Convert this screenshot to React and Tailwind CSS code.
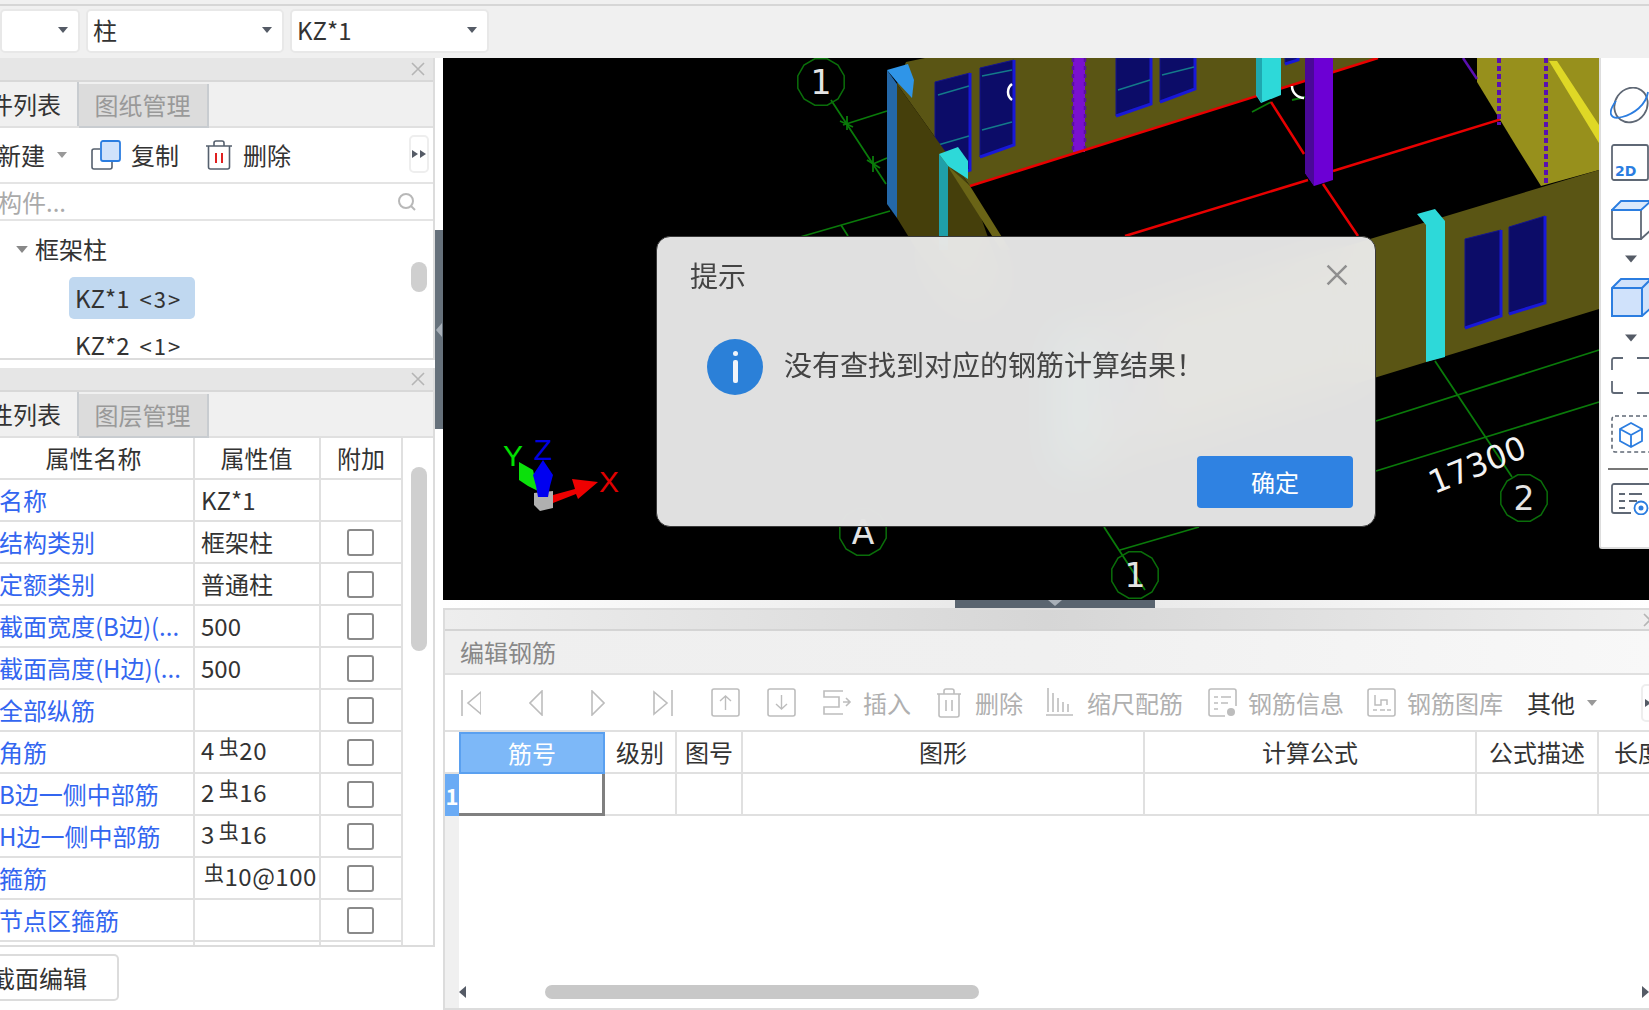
import React from 'react';

const PROPS = [
  { name: '名称', value: 'KZ*1', check: false },
  { name: '结构类别', value: '框架柱', check: true },
  { name: '定额类别', value: '普通柱', check: true },
  { name: '截面宽度(B边)(...', value: '500', check: true },
  { name: '截面高度(H边)(...', value: '500', check: true },
  { name: '全部纵筋', value: '', check: true },
  { name: '角筋', rebar: ['4', '20'], check: true },
  { name: 'B边一侧中部筋', rebar: ['2', '16'], check: true },
  { name: 'H边一侧中部筋', rebar: ['3', '16'], check: true },
  { name: '箍筋', rebar: ['', '10@100'], check: true },
  { name: '节点区箍筋', value: '', check: true },
  { name: '', value: '', check: false },
];

const Caret = ({ className = '' }) => (
  <svg width="10" height="6" viewBox="0 0 10 6" className={className}>
    <path d="M0 0H10L5 6Z" fill="currentColor" />
  </svg>
);

const CloseX = ({ size = 14, color = '#b5b5b5' }) => (
  <svg width={size} height={size} viewBox="0 0 14 14">
    <path d="M1 1L13 13M13 1L1 13" stroke={color} strokeWidth="1.6" fill="none" />
  </svg>
);

const Dropdown = ({ width, text }) => (
  <div className={`${width} h-[44px] shrink-0 bg-white rounded-[5px] border-2 border-[#e8e8e8] flex items-center pl-[5px] pr-[10px] pb-[2px] text-[24px] text-[#333]`}>
    <span className="flex-1">{text}</span>
    <Caret className="text-[#555b66]" />
  </div>
);

const Tabs = ({ first, second }) => (
  <div className="h-[46px] bg-[#f0f0f0] border-b-2 border-[#e0e0e0] flex shrink-0">
    <div className="w-[79px] overflow-hidden flex items-center justify-end pr-[16px] border-r-2 border-[#c8ccd0] text-[24px] text-[#333] whitespace-nowrap">{first}</div>
    <div className="w-[130px] bg-[#dcdcdc] border-r-2 border-b-2 border-[#c8ccd0] mt-[2px] -mb-[2px] flex items-center justify-center pr-[1px] text-[24px] text-[#999]">{second}</div>
  </div>
);

const PanelHeader = ({ height }) => (
  <div className={`${height} bg-[#e6e6e6] border-b-2 border-[#d8d8d8] flex items-center justify-end pr-[8px] shrink-0`}>
    <CloseX />
  </div>
);

const PropValue = ({ row }) => {
  if (row.rebar) {
    return (
      <span className="flex items-center whitespace-nowrap -translate-y-[2px] tracking-[0.5px]">
        {row.rebar[0] ? <span className="mr-[4px]">{row.rebar[0]}</span> : <span className="w-[3px]" />}
        <span className="text-[20px] -translate-y-[3px]">虫</span>
        <span>{row.rebar[1]}</span>
      </span>
    );
  }
  return row.value;
};

function LeftColumn() {
  return (
    <div className="w-[435px] shrink-0 flex flex-col bg-white">
      {/* component list */}
      <div className="h-[302px] flex flex-col border-r-2 border-b-2 border-[#dcdcdc] overflow-hidden">
        <PanelHeader height="h-[24px]" />
        <Tabs first="构件列表" second="图纸管理" />
        <div className="h-[56px] shrink-0 border-b-2 border-[#e4e4e4] flex items-center text-[24px] text-[#333]">
          <span className="-ml-[3px] w-[48px] shrink-0">新建</span>
          <Caret className="ml-[12px] text-[#999]" />
          <svg width="30" height="30" viewBox="0 0 30 30" className="ml-[24px]">
            <path d="M9 9H3a2 2 0 0 0-2 2v16a2 2 0 0 0 2 2h16a2 2 0 0 0 2-2v-6" fill="none" stroke="#55606e" strokeWidth="1.6" />
            <rect x="10" y="1" width="19" height="20" rx="2" fill="#d0e2fb" stroke="#2b7de0" strokeWidth="1.8" />
          </svg>
          <span className="ml-[10px]">复制</span>
          <svg width="28" height="30" viewBox="0 0 28 30" className="ml-[26px]">
            <path d="M1 6H27M9 6V3a2 2 0 0 1 2-2h6a2 2 0 0 1 2 2v3M3.5 6V27a2 2 0 0 0 2 2h17a2 2 0 0 0 2-2V6" fill="none" stroke="#55606e" strokeWidth="1.6" />
            <path d="M11 13V23M17 13V23" stroke="#e02020" strokeWidth="2" />
          </svg>
          <span className="ml-[10px]">删除</span>
          <div className="ml-auto mr-[4px] w-[20px] h-[38px] border-2 border-[#eeeeee] rounded-[5px] flex items-center justify-center -mt-[2px]">
            <svg width="14" height="10" viewBox="0 0 14 10"><path d="M0 1L6 5L0 9ZM8 1L14 5L8 9Z" fill="#555b66" /></svg>
          </div>
        </div>
        <div className="h-[37px] shrink-0 border-b-2 border-[#e4e4e4] flex items-center justify-between pr-[16px] text-[24px] text-[#aaa]">
          <span className="-ml-[2px]">构件...</span>
          <svg width="20" height="20" viewBox="0 0 20 20">
            <circle cx="9" cy="9" r="7" fill="none" stroke="#b8b8b8" strokeWidth="2" />
            <path d="M14 14L18 18" stroke="#b8b8b8" strokeWidth="2" />
          </svg>
        </div>
        <div className="relative flex-1 overflow-hidden text-[#333]">
          <div className="flex items-center h-[30px] mt-[13px] text-[24px]">
            <Caret className="ml-[16px] mr-[7px] w-[12px] h-[7px] text-[#888]" />
            <span>框架柱</span>
          </div>
          <div className="ml-[69px] mt-[13px] w-[126px] h-[42px] rounded-[5px] bg-[#c0d8f0] flex items-center pl-[6px] text-[24px] whitespace-nowrap">KZ*1<span className="ml-[10px] text-[22px] tracking-[2px]">&lt;3&gt;</span></div>
          <div className="ml-[75px] mt-[8px] h-[36px] flex items-center text-[24px] whitespace-nowrap">KZ*2<span className="ml-[10px] text-[22px] tracking-[2px]">&lt;1&gt;</span></div>
          <div className="absolute left-[411px] top-[41px] w-[16px] h-[30px] rounded-full bg-[#cfcfcf]" />
        </div>
      </div>
      <div className="h-[8px] shrink-0" />

      {/* property list */}
      <div className="h-[579px] flex flex-col border-r-2 border-b-2 border-[#dcdcdc] overflow-hidden">
        <PanelHeader height="h-[24px]" />
        <Tabs first="属性列表" second="图层管理" />
        <div className="relative flex-1 overflow-hidden">
          <div className="grid grid-cols-[195px_126px_82px] grid-rows-[42px] auto-rows-[42px] w-[403px] text-[24px]">
            <div className="border-r-2 border-b-2 border-[#e0e0e0] flex items-center justify-center pr-[6px] text-[#333]">属性名称</div>
            <div className="border-r-2 border-b-2 border-[#e0e0e0] flex items-center justify-center pr-[1px] text-[#333]">属性值</div>
            <div className="border-r-2 border-b-2 border-[#e0e0e0] flex items-center justify-center text-[#333]">附加</div>
            {PROPS.map((row, i) => (
              <React.Fragment key={i}>
                <div className="border-r-2 border-b-2 border-[#e0e0e0] flex items-center -indent-[1px] text-[#3366f0] whitespace-nowrap overflow-hidden">{row.name}</div>
                <div className="border-r-2 border-b-2 border-[#e0e0e0] flex items-center pl-[6px] text-[#333]"><PropValue row={row} /></div>
                <div className="border-r-2 border-b-2 border-[#e0e0e0] flex items-center justify-center pr-[1px]">
                  {row.check && <div className="w-[27px] h-[27px] rounded-[3px] border-2 border-[#8a8a8a] bg-white" />}
                </div>
              </React.Fragment>
            ))}
          </div>
          <div className="absolute left-[411px] top-[29px] w-[16px] h-[184px] rounded-full bg-[#cfcfcf]" />
        </div>
      </div>

      <div className="flex-1 flex items-start pt-[7px]">
        <div className="w-[119px] h-[47px] bg-white rounded-r-[5px] border-2 border-l-0 border-[#dcdcdc] flex items-center text-[24px] text-[#333] overflow-hidden whitespace-nowrap">
          <span className="-ml-[9px]">截面编辑</span>
        </div>
      </div>
    </div>
  );
}

function Scene() {
  const circle = (cx, cy, label) => (
    <g key={`${cx}-${cy}`}>
      <polygon
        points={Array.from({ length: 12 }, (_, i) => `${cx + 24 * Math.cos((i * Math.PI) / 6 + 0.26)},${cy + 24 * Math.sin((i * Math.PI) / 6 + 0.26)}`).join(' ')}
        fill="none" stroke="#0a6e0a" strokeWidth="1.5"
      />
      <text x={cx} y={cy + 12} textAnchor="middle" fontSize="33" fill="#e4e4e4" fontFamily="DejaVu Sans">{label}</text>
    </g>
  );
  // only the right and lower edge of a window catches the bright blue
  const win = (pts, key) => (
    <g key={key}>
      <polygon points={pts} fill="#0c0c68" stroke="#14148c" strokeWidth="1" />
      <polyline points={pts.split(' ').slice(1).join(' ')} fill="none" stroke="#1818d8" strokeWidth="3" />
    </g>
  );
  return (
    <svg width="1206" height="542" viewBox="443 58 1206 542" className="block">
      <rect x="443" y="58" width="1206" height="542" fill="#000" />

      {/* grid */}
      <g stroke="#0a7a0a" strokeWidth="1.8" fill="none">
        <path d="M831 100L886 184M843 125L887 111M873 164L887 158M800 237L890 211M841 225L848 236" />
        <path d="M1376 421L1599 350M1376 471L1599 402M1435 361L1512 477M1104 527L1145 590M1120 550L1199 527" />
        <path d="M840 121L853 127M847 116V130M867 160L880 168M873 156V172M1271 102L1252 112M1292 100L1310 96" />
      </g>
      {circle(821, 82, '1')}
      {circle(863, 532, 'A')}
      {circle(1135, 575, '1')}
      {circle(1524, 498, '2')}
      <text x="1477" y="476" textAnchor="middle" fontSize="32" fill="#f4f4f4" fontFamily="DejaVu Sans" transform="rotate(-22 1477 464)">17300</text>

      {/* back wall */}
      <polygon points="897,84 906,62 925,58 1378,58 970,186" fill="#5a5514" />
      {win('935,82 970,73 970,170 935,180', 'w1')}
      {win('980,68 1014,60 1014,145 980,157', 'w2')}
      {win('1116,58 1151,58 1151,104 1116,116', 'w3')}
      {win('1160,58 1195,58 1195,89 1160,102', 'w4')}
      {win('1285,58 1298,58 1298,60 1285,64', 'w5')}
      <path d="M938 95L969 86M938 145L969 136M982 76L1012 70M982 130L1012 122M1118 90L1150 80M1162 75L1194 67" stroke="#147a8a" strokeWidth="1.5" />
      <path d="M1012 84a10 10 0 0 0 0 16" fill="none" stroke="#fff" strokeWidth="2.5" />
      <rect x="1073" y="58" width="12" height="94" fill="#7a10d0" />
      <path d="M1073 58V152M1085 58V150" stroke="#5a10a0" strokeWidth="2.5" strokeDasharray="4 4" />

      {/* side wall */}
      <polygon points="897,84 897,218 960,320 1010,300 970,186" fill="#453f0b" />
      <polygon points="948,166 970,186 1010,250 1001,250 950,170" fill="#6a6416" />
      <polygon points="887,70 897,84 897,218 887,204" fill="#2468a8" />
      <polygon points="887,70 908,64 914,80 912,98 897,82" fill="#2f95e8" />
      <polygon points="939,154 948,166 948,250 939,250" fill="#1f9fa8" />
      <polygon points="939,154 958,147 968,161 968,179 948,166" fill="#2dd9d9" />

      {/* red axes */}
      <g stroke="#e80000" strokeWidth="2.5" fill="none">
        <path d="M970 186L1378 58M1125 236L1308 180M1333 171L1599 89M1271 102L1304 154M1323 184L1358 236" />
      </g>
      <polygon points="1256,58 1281,58 1281,95 1261,103 1256,95" fill="#2dd9d9" />
      <polygon points="1256,58 1262,58 1262,103 1256,95" fill="#1fa8b0" />
      <path d="M1292 86a12 12 0 0 0 12 12" fill="none" stroke="#fff" strokeWidth="2.5" />
      <polygon points="1305,58 1333,58 1333,180 1314,186 1305,173" fill="#6c00d4" />
      <polygon points="1305,58 1314,58 1314,186 1305,173" fill="#4a0898" />

      {/* far right wall */}
      <polygon points="1477,82 1477,58 1599,58 1599,170 1541,186 1516,146" fill="#97901c" />
      <polygon points="1549,61 1557,61 1599,125 1599,143" fill="#dfd826" />
      <path d="M1463 58L1477 79" stroke="#5a10b0" strokeWidth="2.5" />
      <path d="M1499 58V125M1546 58V186" stroke="#5a10b0" strokeWidth="4" strokeDasharray="5 3" />

      {/* front wall */}
      <polygon points="1060,335 1370,239 1599,170 1599,309 1374,378 1060,475" fill="#5a5514" />
      <polygon points="1060,335 1085,328 1085,468 1060,475" fill="#2dd9d9" />
      {win('1465,239 1501,230 1501,316 1465,328', 'w6')}
      {win('1509,227 1545,216 1545,303 1509,314', 'w7')}
      {win('1110,340 1140,332 1140,420 1110,430', 'w8')}
      <polygon points="1417,214 1435,209 1445,221 1445,357 1426,362 1426,225" fill="#2dd9d9" />

      {/* axes widget */}
      <polygon points="534,493 553,491 553,508 540,511 534,505" fill="#b0b0b0" />
      <polygon points="519,462 533,470 538,491 528,486 519,480" fill="#0be00b" />
      <polygon points="553,495 575,489 572,479 598,482 578,499 576,494 553,503" fill="#ee0000" />
      <polygon points="543,460 553,475 550,486 548,497 538,497 536,486 533,475" fill="#0000f0" />
      <text x="513" y="466" textAnchor="middle" fontSize="30" fill="#00e000" fontFamily="Liberation Sans">Y</text>
      <text x="543" y="460" textAnchor="middle" fontSize="30" fill="#0000e0" fontFamily="Liberation Sans">Z</text>
      <text x="609" y="492" textAnchor="middle" fontSize="30" fill="#e00000" fontFamily="Liberation Sans">X</text>
    </svg>
  );
}

const G = '#5f6875';
const B = '#2b7de0';

function SideTools() {
  return (
    <div className="absolute right-0 top-0 w-[50px] h-[491px] bg-white border-l-2 border-b-2 border-[#dddddd] rounded-bl-[3px] flex flex-col items-start pl-[10px] pt-[29px] overflow-hidden">
      <svg width="40" height="38" viewBox="0 0 40 38" className="shrink-0 -ml-[1px]">
        <ellipse cx="21" cy="18" rx="16" ry="18" fill="none" stroke={G} strokeWidth="1.8" transform="rotate(35 21 18)" />
        <path d="M6 14C-3 26 0 33 12 30C24 27 36 18 38 5" fill="none" stroke={B} strokeWidth="1.8" />
      </svg>
      <svg width="40" height="37" viewBox="0 0 40 37" className="shrink-0 mt-[19px]">
        <rect x="1" y="1" width="36" height="35" rx="2" fill="none" stroke={G} strokeWidth="1.8" />
        <text x="4" y="32" fontSize="14" fontWeight="700" fill={B} fontFamily="DejaVu Sans">2D</text>
      </svg>
      <svg width="40" height="40" viewBox="0 0 40 40" className="shrink-0 mt-[19px]">
        <path d="M1 10V37a2 2 0 0 0 2 2H30V10Z" fill="none" stroke={G} strokeWidth="1.8" />
        <path d="M30 39L40 30" fill="none" stroke={G} strokeWidth="1.8" />
        <path d="M1 10L10 1H40L30 10Z" fill="#dbe9fb" stroke={B} strokeWidth="1.8" />
      </svg>
      <Caret className="ml-[14px] mt-[15px] w-[12px] h-[8px] text-[#555b66] shrink-0" />
      <svg width="40" height="39" viewBox="0 0 40 39" className="shrink-0 mt-[15px]">
        <path d="M1 10L10 1H40V30L31 38H1Z" fill="#d0e2fb" stroke={B} strokeWidth="2" />
        <path d="M1 10H31V38M31 10L40 1" fill="none" stroke={B} strokeWidth="2" />
      </svg>
      <Caret className="ml-[14px] mt-[17px] w-[12px] h-[8px] text-[#555b66] shrink-0" />
      <svg width="40" height="38" viewBox="0 0 40 38" className="shrink-0 mt-[15px]">
        <path d="M12 1H3a2 2 0 0 0-2 2V13M1 24V34a2 2 0 0 0 2 2H12M26 1H40M26 36H40" fill="none" stroke={G} strokeWidth="1.8" />
      </svg>
      <svg width="40" height="38" viewBox="0 0 40 38" className="shrink-0 mt-[20px]">
        <rect x="1" y="1" width="40" height="36" rx="3" fill="none" stroke={G} strokeWidth="1.6" strokeDasharray="4 3" />
        <path d="M20 8L31 14V26L20 32L9 26V14ZM9 14L20 20L31 14M20 20V32" fill="none" stroke={B} strokeWidth="1.8" />
      </svg>
      <div className="w-[40px] h-[2px] mt-[15px] -ml-[3px] bg-[#777] shrink-0" />
      <svg width="40" height="32" viewBox="0 0 40 32" className="shrink-0 mt-[13px]">
        <path d="M40 1H3a2 2 0 0 0-2 2V28a2 2 0 0 0 2 2H20" fill="none" stroke={G} strokeWidth="1.8" />
        <path d="M8 11H14M18 11H31M8 18H14M18 18H26M8 25H14" stroke={G} strokeWidth="1.8" />
        <circle cx="30" cy="25" r="6.5" fill="none" stroke={B} strokeWidth="1.8" />
        <circle cx="30" cy="25" r="2.5" fill={B} />
      </svg>
    </div>
  );
}

function Dialog() {
  return (
    <div className="absolute left-[213px] top-[178px] w-[720px] h-[291px] rounded-[14px] border border-[#3a3a3a] bg-[#ececec]/95 backdrop-blur-xl flex flex-col">
      <div className="flex items-center justify-between pl-[33px] pr-[27px] pt-[20px]">
        <span className="text-[28px] text-[#444] leading-[36px]">提示</span>
        <CloseX size={22} color="#8f8f8f" />
      </div>
      <div className="flex items-center pl-[50px] mt-[46px]">
        <div className="w-[56px] h-[56px] rounded-full bg-[#2b80d8] flex flex-col items-center justify-center gap-[4px] shrink-0">
          <div className="w-[5px] h-[5px] rounded-full bg-[#f0f4fa]" />
          <div className="w-[5px] h-[23px] rounded-[2px] bg-[#f0f4fa]" />
        </div>
        <span className="ml-[21px] -translate-y-[3px] text-[28px] text-[#444] whitespace-nowrap">没有查找到对应的钢筋计算结果！</span>
      </div>
      <div className="mt-auto mb-[18px] mr-[22px] self-end w-[156px] h-[52px] rounded-[4px] bg-[#2f82e2] flex items-center justify-center text-[24px] text-white">确定</div>
    </div>
  );
}

const disabled = '#bdbdbd';

const Arrow = ({ dir, bar }) => {
  const w = bar ? 20 : 14;
  const d = dir === 'left'
    ? (bar ? 'M20 2V24L7 13Z' : 'M13 1V25L1 13Z')
    : (bar ? 'M1 2V24L14 13Z' : 'M1 1V25L13 13Z');
  return (
    <svg width={w} height="26" viewBox={`0 0 ${w} 26`} className="shrink-0">
      <path d={d} fill="none" stroke={disabled} strokeWidth="1.6" />
      {bar && <path d={dir === 'left' ? 'M1 0V26' : 'M19 0V26'} stroke={disabled} strokeWidth="1.6" />}
    </svg>
  );
};

const BoxArrow = ({ up, className }) => (
  <svg width="29" height="29" viewBox="0 0 29 29" className={`shrink-0 ${className}`}>
    <rect x="1" y="1" width="27" height="27" rx="2" fill="none" stroke={disabled} strokeWidth="1.6" />
    <path d={up ? 'M14.5 22V8M9 13L14.5 8L20 13' : 'M14.5 7V21M9 16L14.5 21L20 16'} fill="none" stroke={disabled} strokeWidth="1.4" />
  </svg>
);

function BottomPanel() {
  const head = ['筋号', '级别', '图号', '图形', '计算公式', '公式描述', '长度'];
  return (
    <div className="flex-1 flex flex-col border-l-2 border-t-2 border-b-2 border-[#dcdcdc] overflow-hidden">
      <div className="h-[21px] shrink-0 border-b-2 border-[#d4d4d4] bg-gradient-to-r from-[#eeeeee] via-[#d6d6d6] to-[#eeeeee] flex items-center justify-end">
        <div className="-mr-[8px]"><CloseX /></div>
      </div>
      <div className="h-[44px] shrink-0 border-b-2 border-[#e0e0e0] bg-gradient-to-r from-[#efefef] via-[#f0f0f0] to-[#f8f8f8] flex items-center pl-[15px] text-[24px] text-[#888]">编辑钢筋</div>
      <div className="h-[57px] shrink-0 border-b-2 border-[#e0e0e0] flex items-center pl-[16px] text-[24px] text-[#b0b0b0] whitespace-nowrap">
        <Arrow dir="left" bar />
        <div className="ml-[48px]"><Arrow dir="left" /></div>
        <div className="ml-[48px]"><Arrow dir="right" /></div>
        <div className="ml-[48px]"><Arrow dir="right" bar /></div>
        <BoxArrow up className="ml-[38px]" />
        <BoxArrow className="ml-[27px]" />
        <svg width="29" height="26" viewBox="0 0 29 26" className="ml-[27px] shrink-0">
          <path d="M20 1H1V7H16V17H1V24H20M20 12H27M23 8L27 12L23 16" fill="none" stroke={disabled} strokeWidth="1.6" />
        </svg>
        <span className="ml-[11px]">插入</span>
        <svg width="26" height="30" viewBox="0 0 26 30" className="ml-[25px] shrink-0">
          <path d="M1 6H25M8 6V3a2 2 0 0 1 2-2h6a2 2 0 0 1 2 2v3M3 6V27a2 2 0 0 0 2 2h16a2 2 0 0 0 2-2V6M10 12V23M16 12V23" fill="none" stroke={disabled} strokeWidth="1.6" />
        </svg>
        <span className="ml-[13px]">删除</span>
        <svg width="27" height="29" viewBox="0 0 27 29" className="ml-[23px] shrink-0">
          <path d="M2 0V24M7 5V24M12 10V24M17 14V24M22 16V24M0 27H27" fill="none" stroke={disabled} strokeWidth="1.6" />
        </svg>
        <span className="ml-[14px]">缩尺配筋</span>
        <svg width="30" height="30" viewBox="0 0 30 30" className="ml-[25px] shrink-0">
          <path d="M28 18V3a2 2 0 0 0-2-2H3a2 2 0 0 0-2 2V26a2 2 0 0 0 2 2H17" fill="none" stroke={disabled} strokeWidth="1.6" />
          <path d="M6 9H10M13 9H23M6 15H10M13 15H20M6 21H10" stroke={disabled} strokeWidth="1.5" />
          <circle cx="23" cy="24" r="4" fill={disabled} />
        </svg>
        <span className="ml-[10px]">钢筋信息</span>
        <svg width="29" height="29" viewBox="0 0 29 29" className="ml-[23px] shrink-0">
          <rect x="1" y="1" width="27" height="27" rx="2" fill="none" stroke={disabled} strokeWidth="1.6" />
          <path d="M8 7V17H14V12H20V17M6 22H10M13 22H18M20 22H24" fill="none" stroke={disabled} strokeWidth="1.5" />
        </svg>
        <span className="ml-[11px]">钢筋图库</span>
        <span className="ml-[24px] text-[#333]">其他</span>
        <Caret className="ml-[12px] text-[#999] shrink-0" />
        <div className="ml-auto -mr-[12px] w-[20px] h-[38px] border-2 border-[#eeeeee] rounded-[5px] flex items-center pl-[2px] shrink-0">
          <svg width="7" height="10" viewBox="0 0 7 10"><path d="M0 1L6 5L0 9Z" fill="#555b66" /></svg>
        </div>
      </div>
      <div className="flex-1 flex flex-col relative min-h-0">
        <div className="grid grid-cols-[14px_146px_72px_66px_402px_332px_122px_80px] grid-rows-[42px_42px] text-[24px] text-[#333]">
          <div className="border-b-2 border-[#e0e0e0]" />
          {head.map((h, i) => (
            <div
              key={h}
              className={i === 0
                ? 'bg-[#7db8f8] border-2 border-[#5aa0f0] flex items-center justify-center text-white'
                : 'border-r-2 border-b-2 border-[#e0e0e0] flex items-center justify-center whitespace-nowrap overflow-hidden'}
            >
              {h}
            </div>
          ))}
          <div className="bg-[#6aabf5] flex items-center justify-center text-white text-[22px] font-bold">1</div>
          <div className="border-r-[3px] border-b-[3px] border-[#808080]" />
          {[0, 1, 2, 3, 4, 5].map((i) => (
            <div key={i} className="border-r-2 border-b-2 border-[#e0e0e0]" />
          ))}
        </div>
        <div className="absolute left-0 top-[84px] bottom-0 w-[14px] bg-[#f0f0f0]" />
        <div className="mt-auto mb-[8px] h-[16px] flex items-center relative">
          <div className="absolute left-[14px] w-0 h-0 border-y-[6px] border-y-transparent border-r-[7px] border-r-[#555b66]" />
          <div className="ml-[100px] w-[434px] h-[14px] rounded-full bg-[#c8c8c8]" />
          <div className="absolute right-0 w-0 h-0 border-y-[6px] border-y-transparent border-l-[7px] border-l-[#555b66]" />
        </div>
      </div>
    </div>
  );
}

export default function App() {
  return (
    <div className="w-[1649px] h-[1010px] overflow-hidden flex flex-col bg-white font-['Noto_Sans_CJK_SC',sans-serif] leading-none">
      {/* top selectors */}
      <div className="h-[58px] shrink-0 bg-[#f0f0f0] pt-[4px]">
        <div className="border-t-2 border-[#d6d6d6] pt-[3px] flex gap-[6px]">
          <Dropdown width="w-[80px]" text="" />
          <Dropdown width="w-[198px]" text="柱" />
          <Dropdown width="w-[199px]" text="KZ*1" />
        </div>
      </div>

      <div className="flex-1 flex min-h-0">
        <LeftColumn />

        {/* vertical splitter */}
        <div className="w-[8px] shrink-0 flex flex-col bg-white">
          <div className="h-[172px]" />
          <div className="h-[199px] bg-[#66717b] flex items-center justify-center">
            <div className="w-0 h-0 border-y-[7px] border-y-transparent border-r-[6px] border-r-[#a8b0b8]" />
          </div>
        </div>

        <div className="flex-1 flex flex-col min-w-0">
          <div className="relative h-[542px] shrink-0">
            <Scene />
            <SideTools />
            <Dialog />
          </div>
          {/* horizontal splitter */}
          <div className="h-[8px] shrink-0 flex bg-gradient-to-r from-white via-[#e6e6e6] to-white">
            <div className="ml-[512px] w-[200px] h-[8px] bg-[#5a6570] flex justify-center">
              <div className="w-0 h-0 border-x-[7px] border-x-transparent border-t-[6px] border-t-[#a8b0b8]" />
            </div>
          </div>
          <BottomPanel />
        </div>
      </div>
    </div>
  );
}
